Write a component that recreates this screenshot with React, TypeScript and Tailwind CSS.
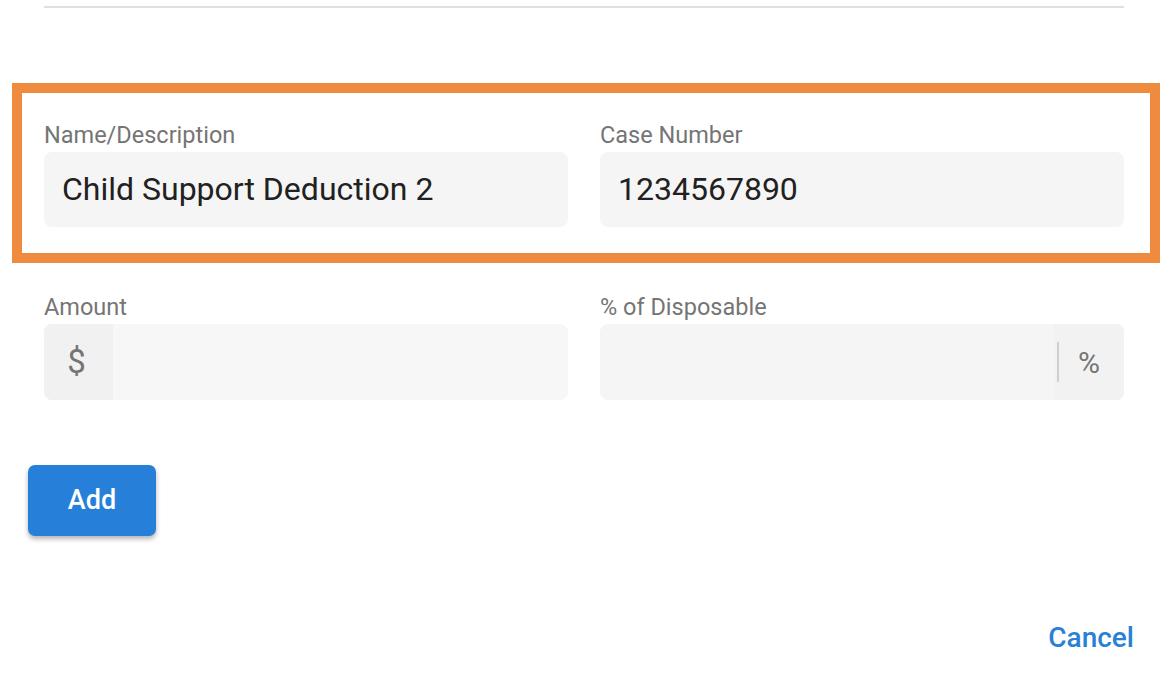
import React from 'react';

const font = { fontFamily: 'Roboto, "Liberation Sans", sans-serif' };

const Label: React.FC<{ children: React.ReactNode }> = ({ children }) => (
  <div className="text-[23.5px] leading-[25px] text-[#757575] mb-[4px]">{children}</div>
);

const TextField: React.FC<{ label: string; value: string }> = ({ label, value }) => (
  <div className="flex flex-col">
    <Label>{label}</Label>
    <div className="h-[75px] rounded-[8px] bg-[#f5f5f5] flex items-center px-[18px]">
      <span className="text-[32px] text-[#212121] -mt-[2px]">{value}</span>
    </div>
  </div>
);

export default function App() {
  return (
    <div className="w-[1170px] h-[684px] bg-white flex flex-col" style={font}>
      {/* Divider */}
      <div className="mt-[6px] ml-[44px] mr-[46px] h-[2px] bg-[#e0e0e0]" />

      {/* Highlighted row */}
      <div className="mt-[75px] ml-[12px] mr-[10px] border-[10px] border-[#ee8b3f] pl-[22px] pr-[26px] pt-[30px] pb-[26px]">
        <div className="grid grid-cols-2 gap-[32px]">
          <TextField label="Name/Description" value="Child Support Deduction 2" />
          <TextField label="Case Number" value="1234567890" />
        </div>
      </div>

      {/* Amount row */}
      <div className="mt-[32px] ml-[44px] mr-[46px] grid grid-cols-2 gap-[32px]">
        <div className="flex flex-col">
          <Label>Amount</Label>
          <div className="h-[76px] rounded-[8px] bg-[#f7f7f7] flex overflow-hidden">
            <div className="w-[69px] bg-[#f1f1f1] flex items-center justify-center">
              <span className="text-[33px] text-[#757575] -ml-[4px]">$</span>
            </div>
            <div className="flex-1" />
          </div>
        </div>
        <div className="flex flex-col">
          <Label>% of Disposable</Label>
          <div className="h-[76px] rounded-[8px] bg-[#f5f5f5] flex overflow-hidden">
            <div className="flex-1" />
            <div className="w-[70px] bg-[#f2f2f2] flex items-center">
              <div className="ml-[3px] w-[2px] h-[40px] bg-[#cfcfcf]" />
              <span className="ml-[19px] text-[30px] text-[#757575]">%</span>
            </div>
          </div>
        </div>
      </div>

      {/* Add */}
      <div className="mt-[65px] ml-[28px]">
        <button className="w-[128px] h-[71px] rounded-[7px] bg-[#2680d9] text-white text-[27px] font-medium shadow-[0_3px_5px_rgba(0,0,0,0.3)]">
          Add
        </button>
      </div>

      {/* Cancel */}
      <div className="flex justify-end mr-[36px] mt-[81px]">
        <button className="text-[28px] font-medium text-[#2a7fd6]">Cancel</button>
      </div>
    </div>
  );
}
